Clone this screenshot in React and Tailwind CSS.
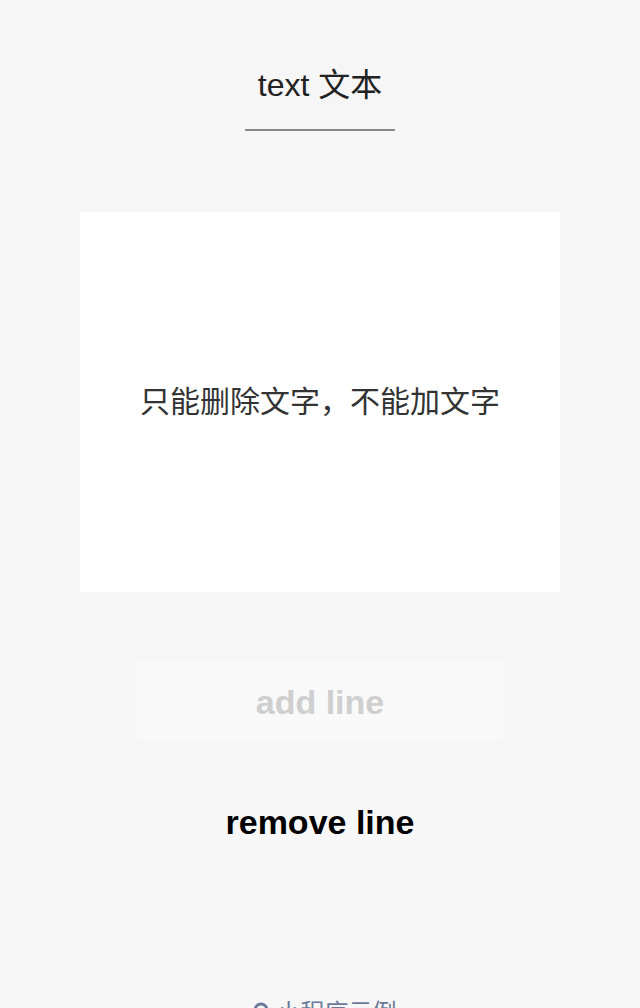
export default function App() {
  return (
    <div
      className="min-h-[1008px] bg-[#f6f6f6] flex flex-col items-center overflow-hidden"
      style={{ fontFamily: '"Liberation Sans", "Noto Sans CJK SC", sans-serif' }}
    >
      {/* 标题 */}
      <div className="mt-[61px] w-[150px] flex flex-col items-center">
        <div className="text-[32px] leading-[48px] text-[#222] whitespace-nowrap">text 文本</div>
        <div className="mt-[20px] w-full h-[2px] bg-[#888]" />
      </div>

      {/* 文本区域 */}
      <div className="mt-[81px] w-[480px] h-[380px] bg-white flex items-center justify-center">
        <span className="text-[30px] text-[#333] leading-none">只能删除文字，不能加文字</span>
      </div>

      {/* 按钮 */}
      <div className="mt-[69px] w-[368px] flex flex-col gap-10">
        <button className="h-20 pt-0.5 rounded-lg bg-[#f9f9f9] text-[34px] font-bold text-[#cfcfcf]">
          add line
        </button>
        <button className="h-20 pt-0.5 rounded-lg bg-[#f7f7f7] text-[34px] font-bold text-black">
          remove line
        </button>
      </div>

      {/* 底部 */}
      <div className="mt-[140px] ml-[9px] flex items-start gap-2 text-[#6b7a99]">
        <svg className="mt-[1px]" width="16" height="16" viewBox="0 0 16 16" fill="none" stroke="currentColor" strokeWidth="3">
          <circle cx="8" cy="8" r="6" />
        </svg>
        <span className="text-[24px] leading-[24px] whitespace-nowrap">小程序示例</span>
      </div>
    </div>
  );
}
